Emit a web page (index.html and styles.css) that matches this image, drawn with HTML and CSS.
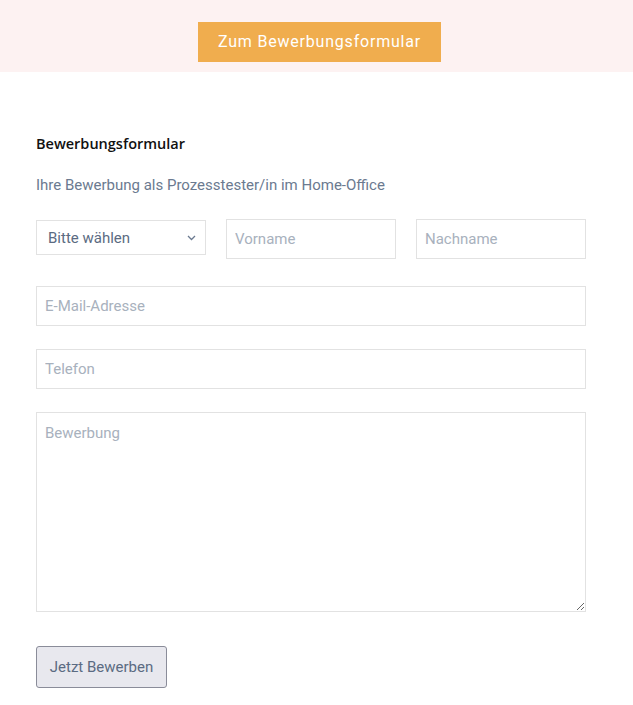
FILE: index.html
```html
<!DOCTYPE html>
<html lang="de">
<head>
    <meta charset="UTF-8">
    <meta name="viewport" content="width=device-width, initial-scale=1.0">
    <title>Bewerbungsformular</title>
    <link rel="stylesheet" href="styles.css">
</head>
<body>
    <div class="top-band">
        <a class="cta" href="#form">Zum Bewerbungsformular</a>
    </div>
    <div class="form-wrap" id="form">
        <h2 class="form-title">Bewerbungsformular</h2>
        <p class="form-sub">Ihre Bewerbung als Prozesstester/in im Home-Office</p>
        <form>
            <div class="row-three">
                <div class="select-box">
                    <select>
                        <option>Bitte wählen</option>
                        <option>Herr</option>
                        <option>Frau</option>
                    </select>
                    <svg class="chev" width="9" height="6" viewBox="0 0 9 6"><path d="M1 1l3.5 3.5L8 1" fill="none" stroke="#6b7a90" stroke-width="1.3"/></svg>
                </div>
                <input type="text" placeholder="Vorname">
                <input type="text" placeholder="Nachname">
            </div>
            <input class="full first" type="email" placeholder="E-Mail-Adresse">
            <input class="full" type="tel" placeholder="Telefon">
            <textarea class="full" placeholder="Bewerbung"></textarea>
            <button type="button" class="submit">Jetzt Bewerben</button>
        </form>
    </div>
</body>
</html>
```

FILE: styles.css
```css
body {
    margin: 0;
    background: #fff;
    font-family: Roboto, "Liberation Sans", sans-serif;
}
.top-band {
    background: #fdf2f2;
    height: 72px;
    display: flex;
    justify-content: center;
    padding-top: 22px;
    padding-left: 6px;
    box-sizing: border-box;
}
.cta {
    display: block;
    width: 243px;
    height: 40px;
    line-height: 40px;
    text-align: center;
    background: #f0ad4e;
    color: #fff;
    font-size: 16px;
    letter-spacing: 0.8px;
    text-decoration: none;
}
.form-wrap {
    width: 550px;
    margin-left: 36px;
    padding-top: 62px;
}
.form-title {
    margin: 0;
    font-family: "Open Sans", sans-serif;
    font-weight: 600;
    font-size: 14.5px;
    color: #111;
    line-height: 20px;
}
.form-sub {
    margin: 21px 0 0;
    font-size: 15px;
    color: #6b7a90;
    line-height: 20px;
}
.row-three {
    display: grid;
    grid-template-columns: repeat(3, 170px);
    gap: 20px;
    margin-top: 24px;
    align-items: start;
}
input, textarea, select {
    font-family: Roboto, "Liberation Sans", sans-serif;
    font-size: 15px;
    box-sizing: border-box;
    border: 1px solid #e2e2e2;
    background: #fff;
    outline: none;
}
input, textarea {
    height: 40px;
    padding: 0 8px;
    color: #333;
}
input::placeholder, textarea::placeholder {
    color: #a8b1bd;
}
.select-box {
    position: relative;
    margin-top: 1px;
}
select {
    width: 170px;
    height: 35px;
    padding: 0 11px;
    color: #5b6b82;
    font-size: 15px;
    appearance: none;
    -webkit-appearance: none;
}
.chev {
    position: absolute;
    right: 10px;
    top: 15px;
    pointer-events: none;
}
.full {
    display: block;
    width: 550px;
    margin-top: 23px;
}
.full.first {
    margin-top: 27px;
}
textarea.full {
    height: 200px;
    padding-top: 11px;
    resize: vertical;
}
.submit {
    display: block;
    margin-top: 34px;
    width: 131px;
    height: 42px;
    background: #e8e8ee;
    border: 1px solid #8a8c99;
    border-radius: 3px;
    color: #5b6b82;
    font-family: Roboto, "Liberation Sans", sans-serif;
    font-size: 15px;
}
```
